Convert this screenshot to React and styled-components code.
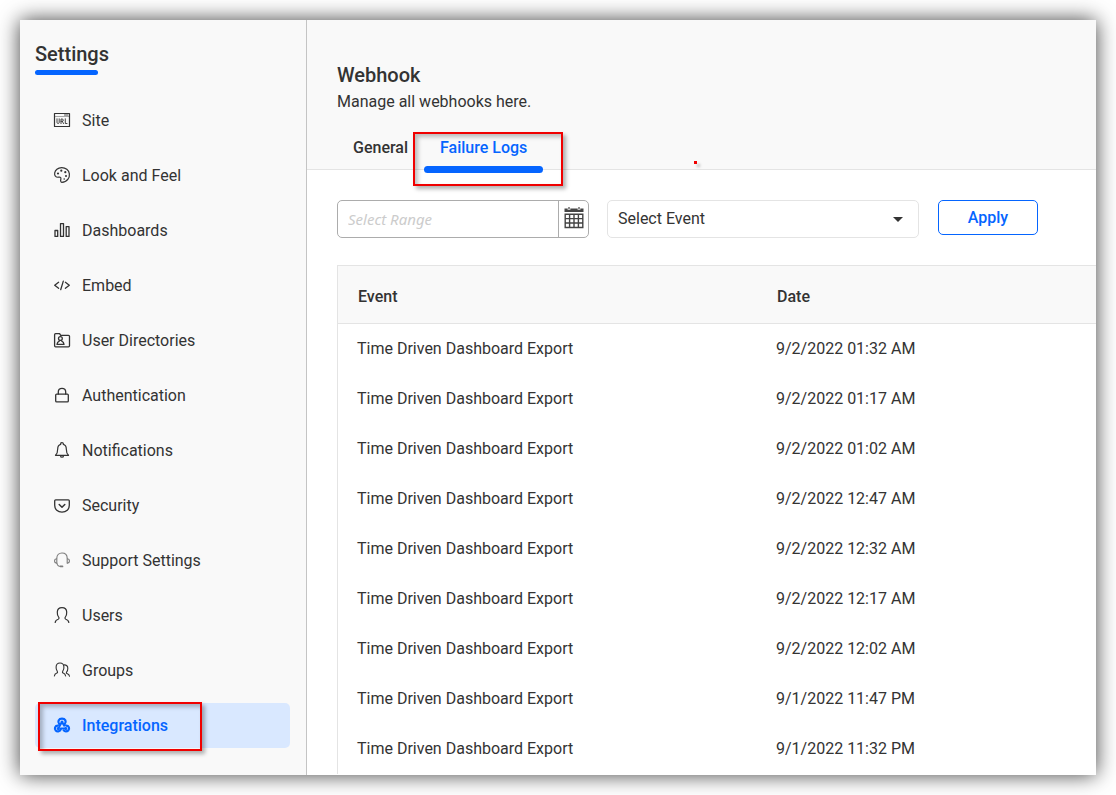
import React from "react";
import styled, { createGlobalStyle, css } from "styled-components";

const Global = createGlobalStyle`
  *, *::before, *::after { box-sizing: border-box; }
  body {
    margin: 0;
    background: #fff;
    color: #333;
    font-family: Roboto, "Liberation Sans", sans-serif;
    font-size: 16px;
    line-height: 20px;
  }
  button, input, select { font: inherit; color: inherit; margin: 0; }
`;

const Page = styled.div`
  min-height: 100vh;
  padding: 20px;
  display: flex;
`;

const Frame = styled.div`
  flex: 1;
  min-width: 0;
  display: flex;
  background: #fff;
  box-shadow: 0 0 20px rgba(0, 0, 0, 0.75);
`;

const Sidebar = styled.aside`
  flex: 0 0 287px;
  padding: 24px 16px 0 15px;
  background: #f9f9f9;
  border-right: 1px solid #c4c4c4;
`;

const SidebarTitle = styled.h1`
  margin: 0 0 23px;
  font-size: 20px;
  line-height: 20px;
  font-weight: 500;
  &::after {
    content: "";
    display: block;
    width: 63px;
    height: 5px;
    margin-top: 6px;
    border-radius: 3px;
    background: #0565ff;
  }
`;

const NavList = styled.ul`
  list-style: none;
  margin: 0;
  padding: 0;
  display: flex;
  flex-direction: column;
  gap: 10px;
`;

const NavLink = styled.a`
  position: relative;
  display: flex;
  align-items: center;
  gap: 12px;
  height: 45px;
  padding: 0 19px;
  border-radius: 5px;
  color: #333;
  text-decoration: none;
  ${(p) =>
    p.$active &&
    css`
      background: #d9e8ff;
      color: #0565ff;
      font-weight: 500;
    `}
`;

const Marker = styled.span`
  position: absolute;
  border: 2px solid #f00000;
  box-shadow: 3px 3px 4px rgba(0, 0, 0, 0.3), inset 3px 3px 4px rgba(0, 0, 0, 0.25);
  pointer-events: none;
`;

const NavMarker = styled(Marker)`
  inset: -1px 88px -3px 3px;
`;

const TabMarker = styled(Marker)`
  inset: 0 -20px -17px -11px;
`;

const Dot = styled.span`
  position: absolute;
  right: 399px;
  bottom: 5px;
  width: 3px;
  height: 3px;
  background: #f00000;
  box-shadow: 3px 3px 3px rgba(0, 0, 0, 0.25);
`;

const Main = styled.main`
  flex: 1;
  min-width: 0;
  display: flex;
  flex-direction: column;
`;

const Header = styled.header`
  position: relative;
  padding: 45px 30px 0;
  background: #f9f9f9;
  border-bottom: 1px solid #e4e4e4;
`;

const Title = styled.h2`
  margin: 0;
  font-size: 20px;
  line-height: 20px;
  font-weight: 500;
`;

const Subtitle = styled.p`
  margin: 7px 0 20px;
`;

const Tabs = styled.div`
  display: flex;
  height: 37px;
`;

const Tab = styled.button`
  position: relative;
  display: flex;
  padding: 6px 16px 0;
  border: 0;
  background: none;
  font-weight: 500;
  cursor: pointer;
  ${(p) =>
    p.$active &&
    css`
      color: #0565ff;
      &::after {
        content: "";
        position: absolute;
        left: 0;
        right: 0;
        bottom: -4px;
        height: 7px;
        border-radius: 4px;
        background: #0565ff;
      }
    `}
`;

const Filters = styled.form`
  display: flex;
  align-items: flex-start;
  padding: 30px 30px 27px;
`;

const RangeField = styled.div`
  display: flex;
  flex: 0 0 252px;
  height: 38px;
  margin-right: 18px;
  border: 1px solid #acacac;
  border-radius: 5px;
  overflow: hidden;
`;

const RangeInput = styled.input`
  flex: 1;
  min-width: 0;
  border: 0;
  padding: 0 10px;
  background: transparent;
  font-family: "Noto Sans", "Open Sans", sans-serif;
  font-size: 15px;
  outline: 0;
  &::placeholder {
    color: #ccc;
    font-style: italic;
    opacity: 1;
  }
`;

const CalendarButton = styled.button`
  display: flex;
  align-items: flex-start;
  justify-content: center;
  width: 30px;
  padding: 6px 0 0;
  border: 0;
  border-left: 1px solid #acacac;
  background: none;
`;

const SelectWrap = styled.div`
  display: grid;
  flex: 0 0 312px;
  margin-right: 19px;
  align-items: center;
  > * { grid-area: 1 / 1; }
  > svg { justify-self: end; margin-right: 16px; pointer-events: none; }
`;

const Select = styled.select`
  appearance: none;
  width: 100%;
  height: 38px;
  padding: 0 10px;
  border: 1px solid #e4e4e4;
  border-radius: 5px;
  background: #fff;
`;

const ApplyButton = styled.button`
  width: 100px;
  height: 35px;
  padding: 0;
  border: 1px solid #0565ff;
  border-radius: 5px;
  background: #fff;
  color: #0565ff;
  font-weight: 500;
`;

const TableWrap = styled.div`
  margin-left: 30px;
  overflow: hidden;
`;

const Table = styled.table`
  width: 100%;
  border-collapse: separate;
  border-spacing: 0;
  table-layout: fixed;
  border-left: 1px solid #e4e4e4;
`;

const HeadCell = styled.th`
  height: 59px;
  padding: 4px 20px 0;
  border: solid #e4e4e4;
  border-width: 1px 0;
  background: #f9f9f9;
  font-weight: 500;
  text-align: left;
  &:first-child { width: 419px; }
`;

const Cell = styled.td`
  height: 50px;
  padding: 0 19px;
`;

const Icon = styled.svg.attrs({
  width: 16,
  height: 16,
  viewBox: "0 1 16 16",
  fill: "none",
  stroke: "currentColor",
  strokeLinecap: "round",
  strokeLinejoin: "round",
  "aria-hidden": true,
})`
  flex: none;
  overflow: visible;
  stroke-width: ${(p) => p.$weight || 1.2};
`;

const userPath =
  "M1.2 15.5c.2-2.3 1.5-2.8 3-3.3 1-.4 1-1.4.4-2.2C3.500 8.500 3.200 6.800 3.300 5 3.400 2.200 5.200.6 8 .6s4.600 1.600 4.700 4.400c.1 1.800-.2 3.500-1.300 5-.6.8-.6 1.800.4 2.200 1.500.5 2.800 1 3 3.300";

const icons = {
  Site: (
    <Icon $weight={1}>
      <path d="M.5 1.500h15v13H.5z" strokeWidth="1.200" />
      <path d="M1 4.500h14" strokeWidth=".6" opacity=".7" />
      <path d="M10.500 3h3.500" strokeWidth=".9" />
      <path
        d="M3 6.800v3.700c0 1.300 2.200 1.300 2.200 0V6.800M7 11.600V7h1.100c1.700 0 1.700 2.300 0 2.300H7m1.300 0 1.200 2.300M11.300 6.800v4.700H13"
        strokeWidth=".9"
      />
    </Icon>
  ),
  "Look and Feel": (
    <Icon>
      <path d="M7.800 15.300c1.300 0 4.300-.6 6.200-3.200 2.300-3.200 1.800-7.600-1.200-9.900C9.800-.1 5.500.1 2.900 2.200.5 4.200-.1 7.400 1.500 9.300c1.500 1.700 3.300.5 4.700 1 1.700.6.3 2.300.4 3.500.1.9.5 1.400 1.200 1.500z" />
      <g fill="currentColor" stroke="none">
        <circle cx="4" cy="6.500" r="1.100" />
        <circle cx="7.300" cy="3.700" r="1.100" />
        <circle cx="11.300" cy="5.200" r="1.100" />
        <circle cx="12" cy="9" r="1" />
        <circle cx="10.200" cy="12" r=".8" />
      </g>
    </Icon>
  ),
  Dashboards: (
    <Icon strokeLinejoin="miter" $weight={1.3}>
      <path d="M1 8.500h2.700v5.900H1zM6.500 1.600h3v12.800h-3zM12.200 4.600H15v9.800h-2.800z" />
    </Icon>
  ),
  Embed: (
    <Icon $weight={1.3}>
      <path d="M4.600 5.300.7 8.300l3.900 3M11.400 5.300l3.900 3-3.900 3M9.300 4.100l-2.600 8.600" />
    </Icon>
  ),
  "User Directories": (
    <Icon $weight={1.3}>
      <path d="M.6 13.800V2.700c0-.7.400-1 1-1h4l1.100 1.600h7.800c.6 0 1 .3 1 1v9.500c0 .6-.4 1-1 1H1.600c-.6 0-1-.4-1-1z" />
      <circle cx="6.400" cy="6.500" r="1.900" />
      <path d="M3 12.400c.1-1.800 1-2.800 2.300-3.300M10 12.400c-.1-1.800-1-2.800-2.300-3.300M3 12.400h7" />
    </Icon>
  ),
  Authentication: (
    <Icon $weight={1.3}>
      <rect x="1.700" y="7.100" width="12.600" height="7.800" rx="1" />
      <path d="M4.300 7V4.900C4.300 2.800 5.700 1.300 8 1.300s3.700 1.500 3.700 3.600V7" />
    </Icon>
  ),
  Notifications: (
    <Icon>
      <path d="M6.700 2.300V1.600C6.700.2 9.300.2 9.300 1.600v.7c2.400.6 3 2.500 3 4.700 0 3.400.5 4.800 2.200 6.300h-13C3.200 11.800 3.700 10.400 3.700 7c0-2.200.6-4.100 3-4.700zM6.500 13.600c.1 2.200 2.900 2.200 3 0" />
    </Icon>
  ),
  Security: (
    <Icon $weight={1.3}>
      <path d="M1.700 2.800h12.600c.6 0 1 .4 1 1v4.400c0 4.200-3.100 7-7.300 7s-7.300-2.800-7.300-7V3.800c0-.6.4-1 1-1z" />
      <path d="M5.200 7.500 8 10.200l2.800-2.700" strokeWidth="1.500" />
    </Icon>
  ),
  "Support Settings": (
    <Icon $weight={1.1} opacity=".62">
      <path d="M2.800 11V6.300C2.800 3 5 1 8 1s5.200 2 5.200 5.300V11" />
      <path d="M2.600 6.800C1 7 .5 7.900.5 9s.7 2 2.100 2.100M13.400 6.800c1.600.2 2.100 1.100 2.100 2.200s-.7 2-2.100 2.100M3 11.200c.2 2 1.500 3.200 3.800 3.200" />
      <path d="M6.800 14.400h1.700" strokeWidth="1.700" />
    </Icon>
  ),
  Users: (
    <Icon>
      <path d={userPath} />
    </Icon>
  ),
  Groups: (
    <Icon $weight={1.1}>
      <path d="M.4 14c.2-2 1.200-2.500 2.400-2.900.9-.3.9-1.200.4-1.900C2.300 8 2 6.500 2.100 5 2.200 2.500 3.600 1 6 1s3.800 1.500 3.900 4c.1 1.500-.2 3-1.100 4.200-.5.7-.5 1.600.4 1.900 1.200.4 2.200.9 2.400 2.900" />
      <path d="M10 2.900c2.400-.2 3.900 1.200 3.800 3.600 0 1.300-.3 2.400-1.100 3.400-.5.600-.4 1.300.3 1.600 1.300.5 2.300.9 2.500 2.800" />
    </Icon>
  ),
  Integrations: (
    <Icon $weight={2.2}>
      <path d="M5.300 7C3.100 4.600 4.800 1.600 8 1.600s4.900 3 2.700 5.300M3.900 8.600C1 8.600.1 11.700 1.700 13.400c1.700 1.800 4.700.9 5.100-1.400M12.100 8.600c2.900 0 3.800 3.100 2.200 4.800-1.400 1.400-3.500 1.300-4.600 0" />
      <path d="M8 5 5.900 8.600 4.300 11.600M8 5l2.200 3.700M6.800 11.600h4.900" strokeWidth="2" />
      <g fill="currentColor" stroke="none">
        <circle cx="8" cy="5" r="1.500" />
        <circle cx="4.200" cy="11.500" r="1.500" />
        <circle cx="11.800" cy="11.500" r="1.500" />
      </g>
    </Icon>
  ),
};

const rows = [
  "9/2/2022 01:32 AM",
  "9/2/2022 01:17 AM",
  "9/2/2022 01:02 AM",
  "9/2/2022 12:47 AM",
  "9/2/2022 12:32 AM",
  "9/2/2022 12:17 AM",
  "9/2/2022 12:02 AM",
  "9/1/2022 11:47 PM",
  "9/1/2022 11:32 PM",
];

export default function App() {
  return (
    <Page>
      <Global />
      <Frame>
        <Sidebar>
          <SidebarTitle>Settings</SidebarTitle>
          <nav aria-label="Settings">
            <NavList>
              {Object.keys(icons).map((name) => {
                const active = name === "Integrations";
                return (
                  <li key={name}>
                    <NavLink href="#" $active={active} aria-current={active ? "page" : undefined}>
                      {icons[name]}
                      {name}
                      {active && <NavMarker />}
                    </NavLink>
                  </li>
                );
              })}
            </NavList>
          </nav>
        </Sidebar>
        <Main>
          <Header>
            <Title>Webhook</Title>
            <Subtitle>Manage all webhooks here.</Subtitle>
            <Tabs role="tablist">
              <Tab type="button" role="tab" aria-selected="false">General</Tab>
              <Tab type="button" role="tab" aria-selected="true" $active>
                Failure Logs
                <TabMarker />
              </Tab>
            </Tabs>
            <Dot />
          </Header>
          <Filters onSubmit={(e) => e.preventDefault()}>
            <RangeField>
              <RangeInput type="text" aria-label="Select Range" placeholder="Select Range" />
              <CalendarButton type="button" aria-label="Open calendar">
                <svg width="20" height="22" viewBox="0 0 20 22" aria-hidden="true">
                  <path
                    d="M.5 1.500h3.200v1.500h2.600V1.500h7.400v1.500h2.600V1.500h3.200V5H.5zM4.400 0h1.200v2.400H4.400zM14.400 0h1.200v2.400h-1.200z"
                    fill="#444"
                  />
                  <path
                    d="M1.200 7.200h17.600v13.300H1.200zM1.200 11.600h17.600M1.200 16h17.600M5.600 7.200v13.300M10 7.200v13.300M14.400 7.200v13.300"
                    fill="none"
                    stroke="#444"
                    strokeWidth="1.400"
                  />
                </svg>
              </CalendarButton>
            </RangeField>
            <SelectWrap>
              <Select aria-label="Select Event" defaultValue="">
                <option value="">Select Event</option>
                <option value="export">Time Driven Dashboard Export</option>
              </Select>
              <svg width="10" height="5" viewBox="0 0 10 5" aria-hidden="true">
                <path d="M0 0h10L5 5z" fill="#333" />
              </svg>
            </SelectWrap>
            <ApplyButton type="submit">Apply</ApplyButton>
          </Filters>
          <TableWrap>
            <Table>
              <thead>
                <tr>
                  <HeadCell scope="col">Event</HeadCell>
                  <HeadCell scope="col">Date</HeadCell>
                </tr>
              </thead>
              <tbody>
                {rows.map((date) => (
                  <tr key={date}>
                    <Cell>Time Driven Dashboard Export</Cell>
                    <Cell>{date}</Cell>
                  </tr>
                ))}
              </tbody>
            </Table>
          </TableWrap>
        </Main>
      </Frame>
    </Page>
  );
}
